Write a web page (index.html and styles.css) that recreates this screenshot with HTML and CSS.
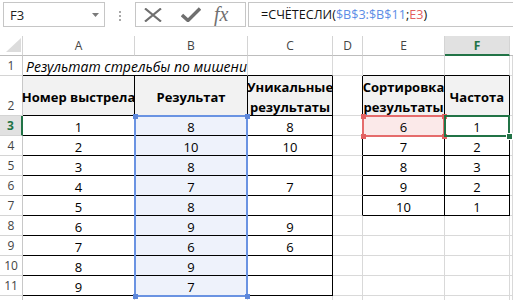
FILE: index.html
```html
<!DOCTYPE html>
<html lang="ru">
<head>
<meta charset="utf-8">
<link rel="stylesheet" href="styles.css">
</head>
<body>
<div class="fbar">
  <div class="namebox"><span>F3</span><svg class="dd" width="7" height="4" viewBox="0 0 7 4"><path d="M0 0H7L3.5 4Z" fill="#7a7a7a"/></svg></div>
  <div class="grip"><svg width="2" height="10" viewBox="0 0 2 10"><rect x="0" y="0" width="2" height="2" fill="#a8a8a8"/><rect x="0" y="4" width="2" height="2" fill="#a8a8a8"/><rect x="0" y="8" width="2" height="2" fill="#a8a8a8"/></svg></div>
  <div class="btns">
    <svg class="bx" width="18" height="14" viewBox="0 0 18 14"><path d="M1 0.5L17 13.5M17 0.5L1 13.5" stroke="#6f6f6f" stroke-width="2.2" fill="none"/></svg>
    <svg class="bc" width="20" height="15" viewBox="0 0 20 15"><path d="M1 8L7 13.5L19 1.5" stroke="#6f6f6f" stroke-width="3.4" fill="none"/></svg>
    <span class="fx">fx</span>
  </div>
  <div class="finput">=СЧЁТЕСЛИ(<span class="r1">$B$3:$B$11</span>;<span class="r2">E3</span>)</div>
</div>

<div class="sheet">
  <div class="ch corner"><svg width="15" height="14" viewBox="0 0 15 14"><path d="M15 0V14H0Z" fill="#dcdcdc"/></svg></div>
  <div class="ch">A</div>
  <div class="ch">B</div>
  <div class="ch">C</div>
  <div class="ch">D</div>
  <div class="ch">E</div>
  <div class="ch act">F</div>
  <div class="ch last"></div>

  <div class="rh">1</div>
  <div class="c title tb">Результат стрельбы по мишени</div>
  <div class="c tb"></div>
  <div class="c"></div>
  <div class="c tb"></div>
  <div class="c tb"></div>
  <div class="c"></div>

  <div class="rh bot">2</div>
  <div class="c t h">Номер выстрела</div>
  <div class="c t h">Результат</div>
  <div class="c t h two">Уникальные<br>результаты</div>
  <div class="c lr"></div>
  <div class="c t h two">Сортировка<br>результаты</div>
  <div class="c t h">Частота</div>
  <div class="c"></div>

  <div class="rh act">3</div>
  <div class="c t">1</div>
  <div class="c t b anchor">8<span class="range blue"><i class="hd tl"></i><i class="hd tr"></i><i class="hd bl"></i><i class="hd br"></i></span></div>
  <div class="c t">8</div>
  <div class="c lr"></div>
  <div class="c t pink anchor">6<span class="range red"><i class="hd tl"></i><i class="hd tr"></i><i class="hd bl"></i><i class="hd br"></i></span></div>
  <div class="c t anchor">1<span class="range green"><i class="fill-handle"></i></span></div>
  <div class="c"></div>

  <div class="rh">4</div>
  <div class="c t">2</div>
  <div class="c t b">10</div>
  <div class="c t">10</div>
  <div class="c lr"></div>
  <div class="c t">7</div>
  <div class="c t">2</div>
  <div class="c"></div>

  <div class="rh">5</div>
  <div class="c t">3</div>
  <div class="c t b">8</div>
  <div class="c t"></div>
  <div class="c lr"></div>
  <div class="c t">8</div>
  <div class="c t">3</div>
  <div class="c"></div>

  <div class="rh">6</div>
  <div class="c t">4</div>
  <div class="c t b">7</div>
  <div class="c t">7</div>
  <div class="c lr"></div>
  <div class="c t">9</div>
  <div class="c t">2</div>
  <div class="c"></div>

  <div class="rh">7</div>
  <div class="c t">5</div>
  <div class="c t b">8</div>
  <div class="c t"></div>
  <div class="c lr"></div>
  <div class="c t">10</div>
  <div class="c t">1</div>
  <div class="c"></div>

  <div class="rh">8</div>
  <div class="c t">6</div>
  <div class="c t b">9</div>
  <div class="c t">9</div>
  <div class="c"></div>
  <div class="c"></div>
  <div class="c"></div>
  <div class="c"></div>

  <div class="rh">9</div>
  <div class="c t">7</div>
  <div class="c t b">6</div>
  <div class="c t">6</div>
  <div class="c"></div>
  <div class="c"></div>
  <div class="c"></div>
  <div class="c"></div>

  <div class="rh">10</div>
  <div class="c t">8</div>
  <div class="c t b">9</div>
  <div class="c t"></div>
  <div class="c"></div>
  <div class="c"></div>
  <div class="c"></div>
  <div class="c"></div>

  <div class="rh">11</div>
  <div class="c t">9</div>
  <div class="c t b">7</div>
  <div class="c t"></div>
  <div class="c"></div>
  <div class="c"></div>
  <div class="c"></div>
  <div class="c"></div>

  <div class="rh"></div>
  <div class="c"></div>
  <div class="c"></div>
  <div class="c"></div>
  <div class="c"></div>
  <div class="c"></div>
  <div class="c"></div>
  <div class="c"></div>
</div>
</body>
</html>
```

FILE: styles.css
```css
* { box-sizing: border-box; }
html, body { margin: 0; padding: 0; background: #fff; }
body {
  width: 513px;
  height: 300px;
  overflow: hidden;
  font-family: "Open Sans", "Noto Sans", sans-serif;
  color: #000;
}

/* formula bar */
.fbar {
  display: flex;
  align-items: flex-start;
  height: 36px;
  padding-top: 2px;
}
.namebox {
  margin-left: 3px;
  width: 102px;
  height: 25px;
  border: 1px solid #c6c6c6;
  display: flex;
  align-items: center;
  justify-content: space-between;
  padding: 0 5px 0 6px;
  font-size: 13px;
  color: #222;
}
.grip {
  width: 30px;
  display: flex;
  justify-content: center;
  padding-top: 9px;
}
.btns {
  width: 111px;
  height: 25px;
  border: 1px solid #c6c6c6;
  display: flex;
  align-items: center;
  padding-left: 8px;
}
.bx { margin-right: 19px; }
.bc { margin-right: 13px; }
.fx {
  font-family: "Liberation Serif", serif;
  font-style: italic;
  font-size: 20px;
  color: #707070;
  line-height: 1;
  margin-top: -2px;
}
.finput {
  flex: 1;
  height: 25px;
  margin-left: 2px;
  border: 1px solid #c6c6c6;
  border-right: none;
  padding-left: 12px;
  display: flex;
  align-items: center;
  font-size: 12.6px;
  color: #111;
  white-space: nowrap;
}
.r1 { color: #5c8de6; }
.r2 { color: #e35f5f; }

/* sheet grid */
.sheet {
  display: grid;
  grid-template-columns: 23px 112px 113px 85px 30px 82px 65px 1fr;
  grid-template-rows: 20px 20px 40px repeat(10, 20px);
}
.ch {
  border-right: 1px solid #d4d4d4;
  border-bottom: 1px solid #bdbdbd;
  display: flex;
  align-items: center;
  justify-content: center;
  font-size: 12px;
  color: #444;
}
.ch.corner {
  align-items: flex-end;
  justify-content: flex-end;
  padding: 0 1px 3px 0;
}
.ch.last { border-right: none; }
.ch.act {
  background: #e1e1e1;
  color: #217346;
  font-weight: 700;
  border-bottom: 2px solid #217346;
}
.rh {
  border-right: 1px solid #c8c8c8;
  border-bottom: 1px solid #d4d4d4;
  display: flex;
  align-items: center;
  justify-content: center;
  font-size: 12px;
  color: #444;
}
.rh.bot { align-items: flex-end; padding-bottom: 1px; }
.rh.act {
  background: #e1e1e1;
  color: #217346;
  font-weight: 700;
  border-right: 2px solid #217346;
}
.c {
  border-right: 1px solid #d9d9d9;
  border-bottom: 1px solid #d9d9d9;
  display: flex;
  align-items: center;
  justify-content: center;
  padding-top: 2px;
  font-size: 13px;
  white-space: nowrap;
}
.c.title {
  grid-column: span 2;
  justify-content: flex-start;
  padding-left: 3px;
  font-style: italic;
  font-size: 14px;
}
.c.tb { border-bottom-color: #000; }
.c.t { border-right-color: #000; border-bottom-color: #000; }
.c.lr { border-right-color: #000; }
.c.h {
  background: #f2f2f2;
  font-weight: 700;
  text-align: center;
  line-height: 20px;
}
.c.b { background: #eef2fb; }
.c.pink { background: #fbe9e9; }

.anchor { position: relative; }
.range {
  position: absolute;
  left: -1px;
  top: -1px;
  width: calc(100% + 2px);
  height: 22px;
  border: 2px solid;
}
.range.blue { border-color: #6a93e2; height: 182px; }
.range.red { border-color: #e56c6c; }
.range.green { border-color: #217346; }
.hd {
  position: absolute;
  width: 5px;
  height: 5px;
}
.blue .hd { background: #5d87da; }
.red .hd { background: #e26262; }
.hd.tl { left: -3.5px; top: -3.5px; }
.hd.tr { right: -3.5px; top: -3.5px; }
.hd.bl { left: -3.5px; bottom: -3.5px; }
.hd.br { right: -3.5px; bottom: -3.5px; }
.fill-handle {
  position: absolute;
  right: -5px;
  bottom: -5px;
  width: 7px;
  height: 7px;
  background: #217346;
  border: 1px solid #fff;
}
```
